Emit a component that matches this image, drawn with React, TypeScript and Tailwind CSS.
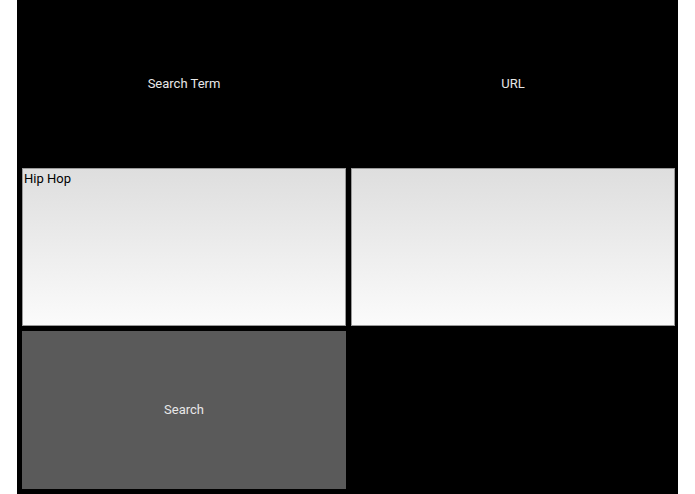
import React, { useState } from "react";

export default function App() {
  const [term, setTerm] = useState("Hip Hop");
  const [url, setUrl] = useState("");

  return (
    <div className="min-h-screen bg-white px-[17px] font-['Roboto',sans-serif] text-[13px]">
      <div className="grid h-[494px] grid-cols-2 grid-rows-3 gap-[5px] bg-black py-[5px] pl-[5px] pr-[3px]">
        {/* Labels */}
        <div className="flex items-center justify-center text-[#e8e8e8]">
          Search Term
        </div>
        <div className="flex items-center justify-center text-[#e8e8e8]">
          URL
        </div>

        {/* Inputs */}
        <textarea
          value={term}
          onChange={(e) => setTerm(e.target.value)}
          className="resize-none border border-[#9a9a9a] bg-gradient-to-b from-[#dedede] to-[#fbfbfb] px-[1px] py-[2px] leading-4 text-black outline-none"
        />
        <textarea
          value={url}
          onChange={(e) => setUrl(e.target.value)}
          className="resize-none border border-[#9a9a9a] bg-gradient-to-b from-[#dedede] to-[#fbfbfb] px-[1px] py-[2px] leading-4 text-black outline-none"
        />

        {/* Action */}
        <button className="flex items-center justify-center bg-[#5a5a5a] text-[#e8e8e8]">
          Search
        </button>
        <div />
      </div>
    </div>
  );
}
